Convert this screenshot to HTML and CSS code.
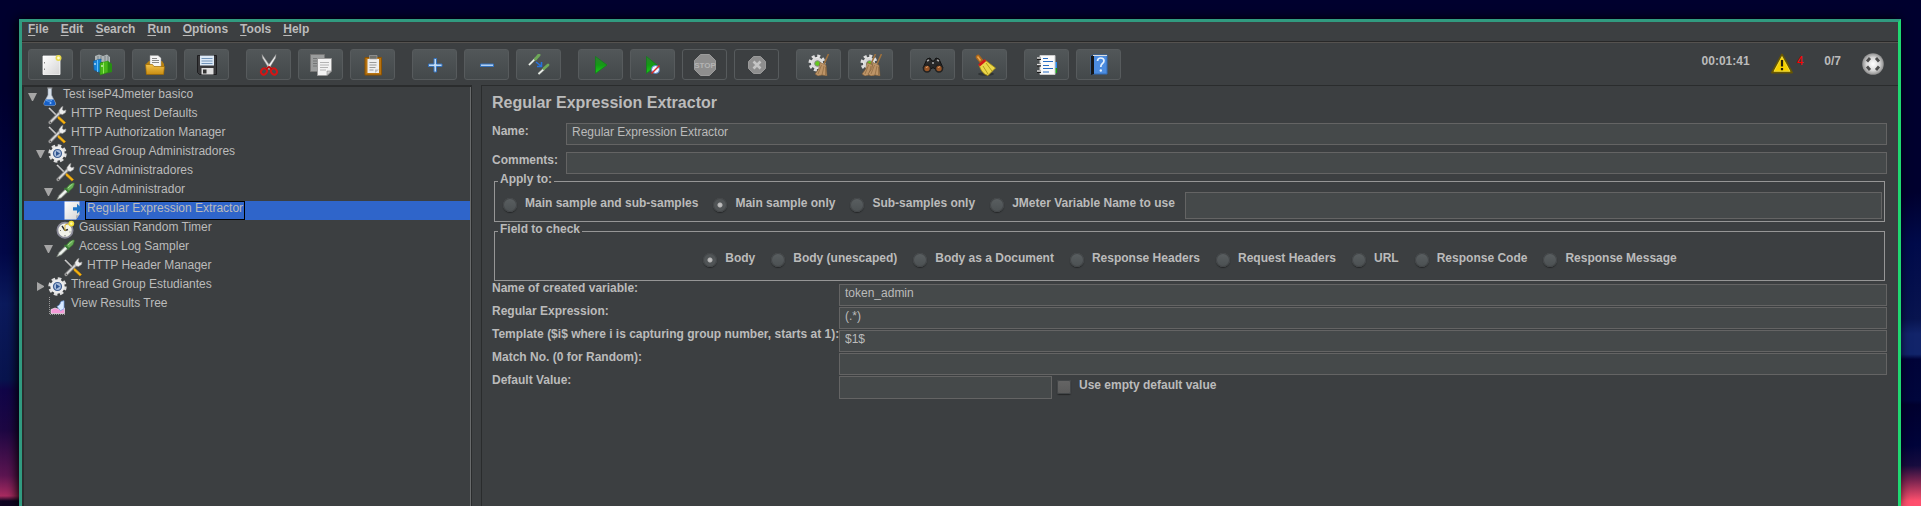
FILE: index.html
```html
<!DOCTYPE html>
<html lang="en">
<head>
<meta charset="utf-8">
<title>Regular Expression Extractor</title>
<link rel="stylesheet" href="styles.css">
</head>
<body>
<svg class="defs" aria-hidden="true">
  <defs>
    <linearGradient id="g-green" x1="0" y1="0" x2="0" y2="1"><stop offset="0" stop-color="#2f7d32"/><stop offset=".5" stop-color="#149a14"/><stop offset="1" stop-color="#18cf18"/></linearGradient>
    <linearGradient id="g-gold" x1="0" y1="0" x2="0" y2="1"><stop offset="0" stop-color="#f3c24b"/><stop offset="1" stop-color="#c98d12"/></linearGradient>
    <linearGradient id="g-page" x1="0" y1="0" x2="1" y2="1"><stop offset="0" stop-color="#ffffff"/><stop offset="1" stop-color="#d4d4d4"/></linearGradient>
    <radialGradient id="g-ball"><stop offset="0" stop-color="#ffffff"/><stop offset=".6" stop-color="#d8d8d8"/><stop offset="1" stop-color="#8f8f8f"/></radialGradient>
    <symbol id="i-tools" viewBox="0 0 19 19">
      <path d="M1 2l8 8" stroke="#e4e4e4" stroke-width="1.6"/><path d="M1 2.6l8 8" stroke="#555" stroke-width=".6"/>
      <path d="M9.500 9.500l2 1.500 6 5.500-1.500 1.600-6-5.600z" fill="#f7b511" stroke="#d99205" stroke-width=".7"/>
      <path d="M2 16.500l10-10" stroke="#8d8d8d" stroke-width="3.200" stroke-linecap="round"/>
      <path d="M2 16.500l10-10" stroke="#d9d9d9" stroke-width="1.600" stroke-linecap="round"/>
      <circle cx="2.300" cy="16.200" r=".8" fill="#444"/>
      <path d="M11 4.500L13.500 1l1.500-.5-.8 3 1.500 1.300L18 4l-.5 2.500-3 2-3.200-.8z" fill="#eee" stroke="#999" stroke-width=".6"/>
    </symbol>
    <symbol id="i-gear" viewBox="0 0 19 19">
      <circle cx="9.500" cy="9.500" r="7.700" fill="none" stroke="#dedede" stroke-width="3" stroke-dasharray="3.500 2.550"/>
      <circle cx="9.500" cy="9.500" r="5.700" fill="#dfe4ea" stroke="#ececec" stroke-width="3"/>
      <circle cx="9.500" cy="9.500" r="4" fill="#a9bddb" stroke="#3f5f93" stroke-width="1.200"/>
      <path d="M8 7l4 2.500L8 12z" fill="#2f5591"/>
    </symbol>
    <symbol id="i-pipette" viewBox="0 0 19 19">
      <path d="M.8 17.800L3 13.500 9.500 7l2.500 2.500-6.500 6.300z" fill="#dfe5df" stroke="#777f77" stroke-width=".8"/>
      <path d="M4 14.500l6.500-6.300" stroke="#fff"/>
      <path d="M8.500 6l4.500 4.500" stroke="#397d35" stroke-width="1.600"/>
      <path d="M10 6.500l3.500-4L17.500.8l1 1-1.500 4-4 3.500z" fill="#66ad55" stroke="#356e2e" stroke-width=".6"/>
      <path d="M12 6l4.500-4" stroke="#a9dc98"/>
    </symbol>
    <symbol id="i-flask" viewBox="0 0 19 19">
      <path d="M8 1v7L4 15.500Q3 18.500 6 18.500h7.500q3 0 1.800-3L11.500 8V1z" fill="#d7dfe8" stroke="#98a4b3" stroke-width=".6"/>
      <path d="M5.800 12.500h8l1.500 3.500q.6 2.500-2 2.500H6q-2.600 0-1.800-2.500z" fill="#1760c7"/>
      <path d="M6 13.500q3 1.500 6 0" stroke="#69a9f6" fill="none"/>
      <path d="M7 1h5.500" stroke="#8c8c8c"/><circle cx="10.500" cy="16" r="1" fill="#8ec1ff"/>
    </symbol>
    <symbol id="i-extract" viewBox="0 0 19 19">
      <path d="M.5.500h15v13l-3.500 5H.5z" fill="url(#g-page)"/>
      <path d="M9 6.200h4V2.800l5.300 5-5.300 5V9.500H9z" fill="#1f75c8"/>
      <path d="M15.500 13.500L12 18.500v-4z" fill="#b5b5b5"/>
    </symbol>
    <symbol id="i-timer" viewBox="0 0 19 19">
      <circle cx="9" cy="10.300" r="7.600" fill="#f2f2ea" stroke="#8b8b99" stroke-width="1.800"/>
      <path d="M9 10.500L6 6M9 10.500l3-1" stroke="#333" stroke-width="1.400"/><path d="M9 11V5l3-1" stroke="#e2bd38" fill="none"/>
      <path d="M4 10.500h1M13.500 12h1M9 15v1.500" stroke="#777"/>
      <circle cx="15.300" cy="3.600" r="2.900" fill="#f5df32"/><circle cx="15.300" cy="3.600" r="1.300" fill="#fff8a0"/>
    </symbol>
    <symbol id="i-chart" viewBox="0 0 19 19">
      <path d="M1.500 1v17.500H18" stroke="#9a9a9a" fill="none" stroke-dasharray="1 1"/>
      <path d="M3 17.500v-4L7 12l3 1 3-2 3.500 1v5.500z" fill="#f49ad8" stroke="#fff" stroke-width=".6"/>
      <path d="M9 10.500q3-1 4-5l3-.8v8l-3.500 2z" fill="#d8e9ff" stroke="#6d9be0" stroke-width=".7"/>
    </symbol>
    <symbol id="i-new" viewBox="0 0 22 22">
      <path d="M3 2h17v18.500H3z" fill="url(#g-page)" stroke="#fff" stroke-width=".8"/>
      <path d="M4.500 8v1.500m0 5v1.500" stroke="#888"/>
      <circle cx="18.500" cy="4" r="3" fill="#e7d94c"/><circle cx="18.500" cy="4" r="1.400" fill="#fffbd0"/>
    </symbol>
    <symbol id="i-templates" viewBox="0 0 22 22">
      <path d="M3 7V2l4-1.500L11 2l4-1.500L18 3v6z" fill="#aeb4b6"/>
      <path d="M6 6V2m3 4V2m4 5V2m3 5V2" stroke="#798386"/>
      <path d="M1.500 7L9 5v14l-7-3z" fill="#1683d8" stroke="#0a5b9f" stroke-width=".6"/><path d="M5.500 6v12" stroke="#5fc0ff"/>
      <path d="M8 9l8-2v11.500L8 21z" fill="#48b71a" stroke="#258c08" stroke-width=".6"/>
      <path d="M16 7l4 3v8l-4 1z" fill="#278e12"/><path d="M11.500 8.500v11" stroke="#91ec55"/>
      <path d="M3 9v2M10 11v2" stroke="#fff"/>
    </symbol>
    <symbol id="i-open" viewBox="0 0 22 22">
      <path d="M2 10l3-3h13l2 3v10H2z" fill="#b8800d"/>
      <path d="M6 1.500h8L17 4v10H6z" fill="#f5f5f5" stroke="#999" stroke-width=".5"/>
      <path d="M8 4.500h5M8 6.500h7M8 8.500h7" stroke="#888"/>
      <path d="M1.500 10.500h7l1.500 2h10.500l-1 8H2.500z" fill="url(#g-gold)" stroke="#9e6a05" stroke-width=".7"/>
    </symbol>
    <symbol id="i-save" viewBox="0 0 22 22">
      <path d="M1.500 1.500h19v19h-17l-2-2z" fill="#39393b" stroke="#1d1d1f"/>
      <path d="M4 1.500h14v10H4z" fill="#dce9f6"/><path d="M5.500 4.500h11M5.500 7h11M5.500 9.500h11" stroke="#7294b9"/>
      <path d="M5.500 14h12v6.500h-12z" fill="#dedede"/><path d="M7 15.500h3.500v4H7z" fill="#333"/>
    </symbol>
    <symbol id="i-cut" viewBox="0 0 22 22">
      <path d="M4 .5L13.500 14l-2 1.500L4.500 4z" fill="#ddd" stroke="#8b8b8b" stroke-width=".5"/>
      <path d="M18 .5L8.500 14l2 1.500L17.500 4z" fill="#f2f2f2" stroke="#8b8b8b" stroke-width=".5"/>
      <ellipse cx="6" cy="17.500" rx="2.800" ry="3.200" transform="rotate(35 6 17.500)" fill="none" stroke="#d61414" stroke-width="2"/>
      <ellipse cx="16" cy="17.500" rx="2.800" ry="3.200" transform="rotate(-35 16 17.500)" fill="none" stroke="#d61414" stroke-width="2"/>
      <path d="M8 15l3-2 3 2" stroke="#b70f0f" stroke-width="2" fill="none"/>
    </symbol>
    <symbol id="i-copy" viewBox="0 0 22 22">
      <path d="M.5.500h14v17H.5z" fill="#9b9d9d" stroke="#777"/><path d="M3 4.500h8M3 7h8M3 9.500h5M3 12h5" stroke="#747676"/>
      <path d="M7.500 4.500h14V17l-4.500 4.500H7.500z" fill="#f3f3f3" stroke="#999"/><path d="M10 8.500h9M10 11h9M10 13.500h8M10 16h6" stroke="#b4b4b4"/><path d="M17 21.500V17h4.500z" fill="#ccc" stroke="#777" stroke-width=".5"/>
    </symbol>
    <symbol id="i-paste" viewBox="0 0 22 22">
      <path d="M3 3.500h16.500v17.500H3z" fill="#b97410" stroke="#8b5203"/>
      <path d="M5.500 5h11.500v14H5.500z" fill="#eee"/><path d="M7.500 1.500h7.500v3.500H7.500z" fill="#6f706b" stroke="#aaa" stroke-width=".6"/>
      <path d="M7.500 8.500h7M7.500 11h7M7.500 13.500h6M7.500 16h4" stroke="#999"/><path d="M13 19v-3.500h4z" fill="#bbb"/>
    </symbol>
    <symbol id="i-plus" viewBox="0 0 22 22"><path d="M10 4.500h2.500v5.500H18v2.500h-5.500V18H10v-5.500H4.500V10H10z" fill="#c3dcf5" stroke="#3472bd"/></symbol>
    <symbol id="i-minus" viewBox="0 0 22 22"><path d="M4.500 10h13v2.500h-13z" fill="#b3d1f2" stroke="#3472bd"/></symbol>
    <symbol id="i-toggle" viewBox="0 0 22 22">
      <path d="M1 11L8 4" stroke="#8b918b" stroke-width="2.400"/><path d="M1 11L8 4" stroke="#f1f5f1" stroke-width="1.400"/><path d="M7.500 5L11 1" stroke="#6ea858" stroke-width="3" stroke-linecap="round"/>
      <path d="M10.500 20L16 15" stroke="#8b918b" stroke-width="2.400"/><path d="M10.500 20L16 15" stroke="#f1f5f1" stroke-width="1.400"/><path d="M16 14.500L20 11" stroke="#6ea858" stroke-width="2.800" stroke-linecap="round"/>
      <path d="M8 8l5 4m.500-4v4.500H9" stroke="#2672dd" stroke-width="1.600" fill="none"/>
    </symbol>
    <symbol id="i-run" viewBox="0 0 22 22"><path d="M5.500 2.500L17 11 5.500 19.500z" fill="url(#g-green)" stroke="#12801a" stroke-width=".8"/></symbol>
    <symbol id="i-run-nopause" viewBox="0 0 22 22"><path d="M4.500 2.500L15 11 4.500 19.500z" fill="url(#g-green)" stroke="#12801a" stroke-width=".8"/><circle cx="13.500" cy="15.500" r="4" fill="#eef4ff" stroke="#4a80c4" stroke-width="1"/><path d="M9.500 19.500l8-8" stroke="#dc2828" stroke-width="1.500"/></symbol>
    <symbol id="i-stop" viewBox="0 0 22 22"><path d="M6.500.5h9l6 6v9l-6 6h-9l-6-6v-9z" fill="#8e8e8e" stroke="#9b9b9b"/><text x="11" y="14" text-anchor="middle" font-family="Liberation Sans, sans-serif" font-size="8" font-weight="700" fill="#b4b4b4">STOP</text></symbol>
    <symbol id="i-shutdown" viewBox="0 0 22 22"><path d="M7.500 2.500h7l5 5v7l-5 5h-7l-5-5v-7z" fill="#8e8e8e" stroke="#999"/><path d="M7.500 7.500l7 7m0-7l-7 7" stroke="#c4c4c4" stroke-width="2.600"/></symbol>
    <symbol id="i-cog" viewBox="0 0 22 22"><circle cx="9" cy="9" r="7" fill="none" stroke="#dedede" stroke-width="3" stroke-dasharray="3 2.500"/><circle cx="9" cy="9" r="5.500" fill="#d8d8d8" stroke="#eee"/><circle cx="9.500" cy="9.500" r="2.800" fill="#63c91c" stroke="#858585"/></symbol>
    <symbol id="i-brush" viewBox="0 0 22 22"><path d="M20.500 0L16 10" stroke="#9d713e" stroke-width="1.600"/><path d="M12 8.500l6 2.500 1 11-5-1-4 1-3-2q5-5 5-11.500z" fill="#bd9467" stroke="#7f5c37" stroke-width=".6"/><path d="M13.500 11L10 20m6-8l-2 9m3.500-8v8" stroke="#8c683f" stroke-width=".7"/></symbol>
    <symbol id="i-clear" viewBox="0 0 22 22"><use href="#i-cog"/><use href="#i-brush"/></symbol>
    <symbol id="i-clear-all" viewBox="0 0 22 22"><use href="#i-cog"/><use href="#i-brush" x="-5"/><use href="#i-brush" x="1"/></symbol>
    <symbol id="i-search" viewBox="0 0 22 22">
      <path d="M1 14L5 5l3-1 2 3h2l2-3 3 1 4 9-5 4-4-4h-2l-4 4z" fill="#282828" stroke="#111"/>
      <path d="M5 7l2-1m8 0l2 1M10 9h2" stroke="#aaa" stroke-width="1.500"/>
      <circle cx="5" cy="14.500" r="3.500" fill="#975527" stroke="#222" stroke-width="1.600"/><circle cx="17" cy="14.500" r="3.500" fill="#975527" stroke="#222" stroke-width="1.600"/>
      <path d="M4 14q1-2 2-1m10 1q1-2 2-1" stroke="#e0a06c" fill="none"/>
    </symbol>
    <symbol id="i-broom" viewBox="0 0 22 22">
      <ellipse cx="12" cy="20" rx="8" ry="1.800" fill="#303436"/>
      <path d="M4 3l4 5" stroke="#ad661a" stroke-width="4.500" stroke-linecap="round"/><path d="M3.500 2.500l3 4" stroke="#eba94c" stroke-width="1.600"/>
      <path d="M5 11l6-5 10.500 8-7.500 7.500q-6-1-9-10.500z" fill="#ebd74a" stroke="#ad930f" stroke-width=".8"/>
      <path d="M9 12l5 8m-2-11l6 8" stroke="#b29c1b"/><path d="M5 11.500l6.500-5.500" stroke="#d01919" stroke-width="2.600"/>
    </symbol>
    <symbol id="i-functions" viewBox="0 0 22 22">
      <path d="M18 8h3v6h-3z" fill="#2588ef"/><path d="M18 14h3v5h-3z" fill="#179d18"/>
      <path d="M4 1.500h15v19H4z" fill="#fafafa" stroke="#ccc"/><path d="M7 4.500h5m-5 3h10m-10 4h6m-6 3h10m-10 3.500h6" stroke="#286cc2" stroke-width="1.200"/>
      <path d="M1 4.500h4M1 11h4M1 17.500h4" stroke="#181818" stroke-width="3"/><path d="M1 4h4M1 10.500h4M1 17h4" stroke="#e5e5e5" stroke-width="1.400"/>
    </symbol>
    <symbol id="i-help" viewBox="0 0 22 22"><path d="M3 2l3-1h13v19H3z" fill="#4c8ce0" stroke="#316db9"/><path d="M3 2l3-1v19l-3 1z" fill="#161616"/><path d="M5 1.500h14" stroke="#ddd"/><path d="M9.500 7q.2-3 3.200-3 3.300 0 3.300 2.800 0 1.700-1.800 2.900-1.400 1-1.400 3.300" stroke="#e5f2ff" stroke-width="1.700" fill="none"/><circle cx="12.800" cy="16.500" r="1.200" fill="#e5f2ff"/></symbol>
    <symbol id="i-warning" viewBox="0 0 22 22"><path d="M11 1.500L21 19.500H1z" fill="#f5d000" stroke="#685700" stroke-width="1.800" stroke-linejoin="round"/><path d="M11 3.500L19 18.300H3z" fill="none" stroke="#fff05f" stroke-width=".6"/><path d="M11 7v6.500m0 1.500v2.200" stroke="#25200a" stroke-width="2.200"/></symbol>
    <symbol id="i-remote" viewBox="0 0 22 22"><circle cx="11" cy="11" r="10.800" fill="url(#g-ball)"/><path d="M5 8.500L8 5m6 0l3 3.500M5 13.500L8 17m6 0l3-3.500" stroke="#4c4c4c" stroke-width="2.800"/></symbol>
  </defs>
</svg>

<div class="desktop">
  <div class="window">
    <nav class="menubar" aria-label="Main menu">
      <button class="menu"><u>F</u>ile</button>
      <button class="menu"><u>E</u>dit</button>
      <button class="menu"><u>S</u>earch</button>
      <button class="menu"><u>R</u>un</button>
      <button class="menu"><u>O</u>ptions</button>
      <button class="menu"><u>T</u>ools</button>
      <button class="menu"><u>H</u>elp</button>
    </nav>

    <div class="toolbar">
      <div class="group">
        <button class="tool" aria-label="New"><svg><use href="#i-new"/></svg></button>
        <button class="tool" aria-label="Templates"><svg><use href="#i-templates"/></svg></button>
        <button class="tool" aria-label="Open"><svg><use href="#i-open"/></svg></button>
        <button class="tool" aria-label="Save"><svg><use href="#i-save"/></svg></button>
      </div>
      <div class="group">
        <button class="tool" aria-label="Cut"><svg><use href="#i-cut"/></svg></button>
        <button class="tool" aria-label="Copy"><svg><use href="#i-copy"/></svg></button>
        <button class="tool" aria-label="Paste"><svg><use href="#i-paste"/></svg></button>
      </div>
      <div class="group">
        <button class="tool" aria-label="Expand all"><svg><use href="#i-plus"/></svg></button>
        <button class="tool" aria-label="Collapse all"><svg><use href="#i-minus"/></svg></button>
        <button class="tool" aria-label="Toggle"><svg><use href="#i-toggle"/></svg></button>
      </div>
      <div class="group">
        <button class="tool" aria-label="Start"><svg><use href="#i-run"/></svg></button>
        <button class="tool" aria-label="Start no pauses"><svg><use href="#i-run-nopause"/></svg></button>
        <button class="tool" aria-label="Stop" disabled><svg><use href="#i-stop"/></svg></button>
        <button class="tool" aria-label="Shutdown" disabled><svg><use href="#i-shutdown"/></svg></button>
      </div>
      <div class="group">
        <button class="tool" aria-label="Clear"><svg><use href="#i-clear"/></svg></button>
        <button class="tool" aria-label="Clear all"><svg><use href="#i-clear-all"/></svg></button>
      </div>
      <div class="group">
        <button class="tool" aria-label="Search"><svg><use href="#i-search"/></svg></button>
        <button class="tool" aria-label="Reset search"><svg><use href="#i-broom"/></svg></button>
      </div>
      <div class="group">
        <button class="tool" aria-label="Function helper"><svg><use href="#i-functions"/></svg></button>
        <button class="tool" aria-label="Help"><svg><use href="#i-help"/></svg></button>
      </div>
      <div class="status">
        <span>00:01:41</span>
        <span class="errors"><svg><use href="#i-warning"/></svg><span class="error-count">4</span></span>
        <span>0/7</span>
        <svg><use href="#i-remote"/></svg>
      </div>
    </div>

    <div class="workspace">
      <ul class="tree" role="tree" aria-label="Test plan">
        <li class="node" role="treeitem"><span class="toggle open"></span><svg><use href="#i-flask"/></svg><span class="node-name">Test iseP4Jmeter basico</span></li>
        <li class="node level-1" role="treeitem"><span class="toggle"></span><svg><use href="#i-tools"/></svg><span class="node-name">HTTP Request Defaults</span></li>
        <li class="node level-1" role="treeitem"><span class="toggle"></span><svg><use href="#i-tools"/></svg><span class="node-name">HTTP Authorization Manager</span></li>
        <li class="node level-1" role="treeitem"><span class="toggle open"></span><svg><use href="#i-gear"/></svg><span class="node-name">Thread Group Administradores</span></li>
        <li class="node level-2" role="treeitem"><span class="toggle"></span><svg><use href="#i-tools"/></svg><span class="node-name">CSV Administradores</span></li>
        <li class="node level-2" role="treeitem"><span class="toggle open"></span><svg><use href="#i-pipette"/></svg><span class="node-name">Login Administrador</span></li>
        <li class="node level-3 selected" role="treeitem" aria-selected="true"><span class="toggle"></span><svg><use href="#i-extract"/></svg><span class="node-name">Regular Expression Extractor</span></li>
        <li class="node level-2" role="treeitem"><span class="toggle"></span><svg><use href="#i-timer"/></svg><span class="node-name">Gaussian Random Timer</span></li>
        <li class="node level-2" role="treeitem"><span class="toggle open"></span><svg><use href="#i-pipette"/></svg><span class="node-name">Access Log Sampler</span></li>
        <li class="node level-3" role="treeitem"><span class="toggle"></span><svg><use href="#i-tools"/></svg><span class="node-name">HTTP Header Manager</span></li>
        <li class="node level-1" role="treeitem"><span class="toggle closed"></span><svg><use href="#i-gear"/></svg><span class="node-name">Thread Group Estudiantes</span></li>
        <li class="node level-1" role="treeitem"><span class="toggle"></span><svg><use href="#i-chart"/></svg><span class="node-name">View Results Tree</span></li>
      </ul>

      <main class="panel">
        <h1 class="title">Regular Expression Extractor</h1>
        <div class="identity">
          <label for="name">Name:</label>
          <input class="field" id="name" type="text" value="Regular Expression Extractor">
          <label for="comments">Comments:</label>
          <input class="field" id="comments" type="text">
        </div>

        <fieldset class="box">
          <legend>Apply to:</legend>
          <div class="options apply">
            <label class="option"><input type="radio" name="apply">Main sample and sub-samples</label>
            <label class="option"><input type="radio" name="apply" checked>Main sample only</label>
            <label class="option"><input type="radio" name="apply">Sub-samples only</label>
            <label class="option"><input type="radio" name="apply">JMeter Variable Name to use</label>
            <input class="field variable" type="text" aria-label="JMeter Variable Name">
          </div>
        </fieldset>

        <fieldset class="box">
          <legend>Field to check</legend>
          <div class="options check">
            <label class="option"><input type="radio" name="check" checked>Body</label>
            <label class="option"><input type="radio" name="check">Body (unescaped)</label>
            <label class="option"><input type="radio" name="check">Body as a Document</label>
            <label class="option"><input type="radio" name="check">Response Headers</label>
            <label class="option"><input type="radio" name="check">Request Headers</label>
            <label class="option"><input type="radio" name="check">URL</label>
            <label class="option"><input type="radio" name="check">Response Code</label>
            <label class="option"><input type="radio" name="check">Response Message</label>
          </div>
        </fieldset>

        <div class="settings">
          <label for="refname">Name of created variable:</label>
          <input class="field" id="refname" type="text" value="token_admin">
          <label for="regex">Regular Expression:</label>
          <input class="field" id="regex" type="text" value="(.*)">
          <label for="template">Template ($i$ where i is capturing group number, starts at 1):</label>
          <input class="field" id="template" type="text" value="$1$">
          <label for="match">Match No. (0 for Random):</label>
          <input class="field" id="match" type="text">
          <label for="default">Default Value:</label>
          <div class="default">
            <input class="field" id="default" type="text">
            <label class="option"><input type="checkbox">Use empty default value</label>
          </div>
        </div>
      </main>
    </div>
  </div>
</div>
</body>
</html>
```

FILE: styles.css
```css
* {
  box-sizing: border-box;
}

body {
  margin: 0;
  font-family: "Liberation Sans", Arial, sans-serif;
  font-size: 12px;
  line-height: 16px;
  color: #bbbbbb;
}

button,
input {
  font: inherit;
  color: inherit;
  margin: 0;
}

.defs {
  position: absolute;
  width: 0;
  height: 0;
}

.desktop {
  display: flex;
  min-height: 100vh;
  padding: 19px 20px 0 19px;
  background:
    linear-gradient(#00002e 0, #00002e 38%, #000a4a 48%, #08144f 63%, #12246a 66%, #11246a 70%, #000338 71%, #00063c 79%, #00002e 80%, #00033a 88%, #170c3e 92%, #7a2450 95%, #ff506e 99%) right / 50% 100% no-repeat,
    linear-gradient(#00002e 0, #00002e 18%, #020848 50%, #0b1a5c 60%, #08144e 75%, #100548 77%, #1d0743 85%, #5c1551 94%, #a82b60 98%, #100522 99%) #00002e;
}

.window {
  flex: 1;
  min-width: 0;
  display: flex;
  flex-direction: column;
  border: 3px solid #319b80;
  border-right-color: #1fd872;
  border-bottom: 0;
  background: #3c3f41;
  box-shadow: -2px 0 10px #000000;
}

.menubar {
  display: flex;
  gap: 12px;
  padding: 0 6px 5px;
  border-bottom: 1px solid #282828;
}

.menu {
  padding: 0;
  border: 0;
  background: none;
  font-weight: 700;
  line-height: 14px;
}

.menu u {
  text-underline-offset: 2px;
}

.toolbar {
  display: flex;
  gap: 17px;
  padding: 6px 14px 5px 6px;
  border-top: 1px solid #55524f;
}

.group {
  display: flex;
  gap: 7px;
}

.tool {
  display: grid;
  place-items: center;
  width: 45px;
  height: 31px;
  padding: 0;
  border: 1px solid #575b5d;
  border-radius: 3px;
  background: linear-gradient(#525759, #43484a);
}

.tool:disabled {
  background: none;
}

.tool svg,
.status svg {
  display: block;
  width: 22px;
  height: 22px;
}

.status {
  display: flex;
  align-items: flex-start;
  gap: 21px;
  margin-left: auto;
  padding-top: 4px;
  font-weight: 700;
}

.errors {
  display: flex;
  gap: 4px;
}

.error-count {
  color: #ff0000;
  font-weight: 400;
}

.workspace {
  flex: 1;
  display: flex;
  gap: 9px;
}

.tree {
  flex: 0 0 450px;
  margin: 0;
  padding: 0;
  list-style: none;
  border: solid #2a2c2d;
  border-width: 2px 1px 0 2px;
  box-shadow: inset -1px 0 #696b6c;
}

.node {
  display: flex;
  align-items: flex-start;
  height: 19px;
  margin-right: 1px;
  padding-left: 2px;
  white-space: nowrap;
}

.node svg {
  flex: none;
  width: 19px;
  height: 19px;
}

.level-1 {
  padding-left: 10px;
}

.level-2 {
  padding-left: 18px;
}

.level-3 {
  padding-left: 26px;
}

.toggle {
  flex: none;
  width: 14px;
  height: 19px;
  background: #a5a5a5;
  clip-path: polygon(0 0, 0 0, 0 0);
}

.open {
  clip-path: polygon(2px 6px, 11px 6px, 7px 14px, 6px 14px);
}

.closed {
  clip-path: polygon(3px 5px, 10px 9px, 10px 10px, 3px 14px);
}

.node-name {
  height: 19px;
  margin-left: 2px;
  padding: 0 2px;
  line-height: 14px;
}

.selected {
  background: #2f65ca;
}

.selected .node-name {
  padding: 0 1px;
  border: 1px solid #000000;
  line-height: 12px;
}

.panel {
  flex: 1;
  min-width: 0;
  padding: 8px 11px 24px 10px;
  border: solid #2a2c2d;
  border-width: 1px 0 0 1px;
}

.title {
  margin: 0 0 11px;
  font-size: 16px;
  line-height: 18px;
}

.identity {
  display: grid;
  grid-template-columns: 74px 1fr;
  row-gap: 7px;
  font-weight: 700;
}

.field {
  width: 100%;
  min-width: 0;
  height: 22px;
  padding: 0 5px 5px;
  border: 1px solid #646464;
  background: #45494a;
  font-weight: 400;
}

.box {
  min-width: 0;
  margin: 0 2px;
  padding: 0 2px 0 3px;
  border: 1px solid #969696;
  font-weight: 700;
}

.box + .box {
  margin: 2px 2px;
}

.box legend {
  padding: 0 2px 4px;
  line-height: 10px;
}

.options {
  display: flex;
  align-items: flex-start;
  gap: 16px;
}

.apply {
  gap: 15px;
  padding: 4px 0 2px 5px;
}

.apply .option {
  margin-top: 3px;
}

.check {
  justify-content: center;
  padding: 12px 0 13px;
}

.option {
  display: flex;
  align-items: flex-start;
  gap: 8px;
  line-height: 16px;
  white-space: nowrap;
}

.option input {
  appearance: none;
  flex: none;
  width: 14px;
  height: 14px;
  margin-top: 3px;
  border-radius: 50%;
  background: linear-gradient(#5a5f61, #4b5052);
  box-shadow: 0 1px 1px #242627, inset 0 0 0 1px #434648;
}

.option input:checked {
  background: radial-gradient(circle, #c4c4c4 0, #b4b4b4 2px, #505456 3px);
}

.option input[type="checkbox"] {
  border-radius: 2px;
  background: linear-gradient(#656565, #5a5a5a);
}

.variable {
  flex: 1;
  height: 27px;
  margin-left: -5px;
}

.settings {
  display: grid;
  grid-template-columns: 347px 1fr;
  row-gap: 1px;
  padding-top: 1px;
  font-weight: 700;
  line-height: 8px;
  white-space: nowrap;
}

.default {
  display: flex;
  gap: 5px;
}

.default .field {
  width: 213px;
  height: 23px;
}

.default .option {
  padding-top: 1px;
}
```
